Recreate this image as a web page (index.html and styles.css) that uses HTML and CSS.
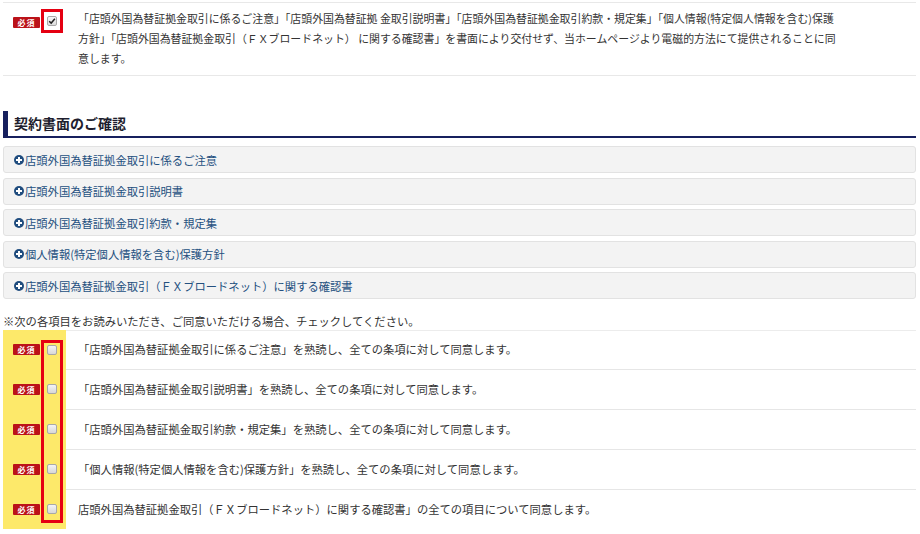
FILE: index.html
```html
<!DOCTYPE html>
<html lang="ja">
<head>
<meta charset="utf-8">
<title>契約書面のご確認</title>
<link rel="stylesheet" href="styles.css">
</head>
<body>
<div class="page">
  <section class="consent-top">
    <div class="req-cell">
      <span class="badge">必須</span>
      <span class="cb checked"><svg viewBox="0 0 10 10" width="8" height="8"><path d="M1.5 5.2 L4 7.6 L8.6 2.2" fill="none" stroke="#222" stroke-width="1.8"/></svg></span>
      <span class="hl hl-top"></span>
    </div>
    <p class="consent-text">「店頭外国為替証拠金取引に係るご注意」「店頭外国為替証拠 金取引説明書」「店頭外国為替証拠金取引約款・規定集」「個人情報(特定個人情報を含む)保護<br>方針」「店頭外国為替証拠金取引（ＦＸブロードネット） に関する確認書」を書面により交付せず、当ホームページより電磁的方法にて提供されることに同<br>意します。</p>
  </section>

  <h2 class="sec-title">契約書面のご確認</h2>

  <ul class="docs">
    <li class="doc"><span class="plus"></span>店頭外国為替証拠金取引に係るご注意</li>
    <li class="doc"><span class="plus"></span>店頭外国為替証拠金取引説明書</li>
    <li class="doc"><span class="plus"></span>店頭外国為替証拠金取引約款・規定集</li>
    <li class="doc"><span class="plus"></span>個人情報(特定個人情報を含む)保護方針</li>
    <li class="doc"><span class="plus"></span>店頭外国為替証拠金取引（ＦＸブロードネット）に関する確認書</li>
  </ul>

  <p class="note">※次の各項目をお読みいただき、ご同意いただける場合、チェックしてください。</p>

  <div class="agree">
    <div class="agree-row">
      <div class="req-cell yellow"><span class="badge">必須</span><span class="cb"></span></div>
      <div class="agree-text">「店頭外国為替証拠金取引に係るご注意」を熟読し、全ての条項に対して同意します。</div>
    </div>
    <div class="agree-row">
      <div class="req-cell yellow"><span class="badge">必須</span><span class="cb"></span></div>
      <div class="agree-text">「店頭外国為替証拠金取引説明書」を熟読し、全ての条項に対して同意します。</div>
    </div>
    <div class="agree-row">
      <div class="req-cell yellow"><span class="badge">必須</span><span class="cb"></span></div>
      <div class="agree-text">「店頭外国為替証拠金取引約款・規定集」を熟読し、全ての条項に対して同意します。</div>
    </div>
    <div class="agree-row">
      <div class="req-cell yellow"><span class="badge">必須</span><span class="cb"></span></div>
      <div class="agree-text">「個人情報(特定個人情報を含む)保護方針」を熟読し、全ての条項に対して同意します。</div>
    </div>
    <div class="agree-row">
      <div class="req-cell yellow"><span class="badge">必須</span><span class="cb"></span></div>
      <div class="agree-text">店頭外国為替証拠金取引（ＦＸブロードネット）に関する確認書」の全ての項目について同意します。</div>
    </div>
    <span class="hl hl-list"></span>
  </div>
</div>
</body>
</html>
```

FILE: styles.css
```css
* { box-sizing: border-box; }

html, body {
  margin: 0;
  padding: 0;
  background: #fff;
}

body {
  font-family: "Noto Sans CJK JP", "Noto Sans", sans-serif;
  font-size: 11.3px;
  color: #333;
}

.page {
  margin: 2px 4px 0 3px;
}

/* top consent */
.consent-top {
  display: flex;
  border-top: 1px solid #e8e8e8;
  border-bottom: 1px solid #e8e8e8;
  padding: 5px 0 7px;
}

.req-cell {
  position: relative;
  width: 63px;
  flex: 0 0 63px;
  display: flex;
  align-items: center;
  padding-left: 10px;
}

.consent-top .req-cell {
  align-items: flex-start;
  padding-top: 9px;
}

.badge {
  display: inline-block;
  width: 27px;
  height: 11px;
  line-height: 11px;
  background: #bb1219;
  color: #fff;
  font-size: 8px;
  font-weight: bold;
  text-align: center;
  border-radius: 1px;
  letter-spacing: 1px;
}

.cb {
  display: inline-flex;
  align-items: center;
  justify-content: center;
  width: 10px;
  height: 10px;
  margin-left: 7px;
  border: 1px solid #a8a8a8;
  border-radius: 2px;
  background: linear-gradient(#f4f4f4, #d8d8d8);
}

.consent-top .cb {
  margin-top: -1px;
}

.cb.checked {
  background: linear-gradient(#f6f6f6, #dcdcdc);
}

.hl {
  position: absolute;
  border: 3px solid #e50012;
}

.hl-top {
  left: 38px;
  top: 1px;
  width: 22px;
  height: 24px;
}

.consent-text {
  margin: 0;
  padding-left: 12px;
  line-height: 20px;
  font-size: 10.9px;
  white-space: nowrap;
}

/* heading */
.sec-title {
  margin: 35px 0 0;
  height: 27px;
  line-height: 25px;
  font-size: 14px;
  font-weight: bold;
  color: #1e1e2e;
  border-left: 5px solid #17205e;
  border-bottom: 2px solid #17205e;
  padding-left: 6px;
}

/* docs list */
.docs {
  list-style: none;
  margin: 8px 0 0;
  padding: 0;
}

.doc {
  display: flex;
  align-items: center;
  height: 27px;
  margin-bottom: 4.5px;
  padding-left: 10px;
  background: #f3f3f3;
  border: 1px solid #e2e2e2;
  border-radius: 3px;
  color: #24507f;
}

.doc:last-child {
  margin-bottom: 0;
}

.plus {
  position: relative;
  width: 10px;
  height: 10px;
  margin-right: 1px;
  border-radius: 50%;
  background: #1f4c7e;
  flex: 0 0 10px;
}

.plus::before,
.plus::after {
  content: "";
  position: absolute;
  background: #fff;
}

.plus::before {
  left: 2px;
  top: 4px;
  width: 6px;
  height: 2px;
}

.plus::after {
  left: 4px;
  top: 2px;
  width: 2px;
  height: 6px;
}

/* note */
.note {
  margin: 14px 0 1px;
  line-height: 16px;
}

/* agreement rows */
.agree {
  position: relative;
}

.agree-row {
  display: flex;
  height: 40px;
}

.agree-row:first-child {
  height: 39px;
}

.req-cell.yellow {
  background: #fde96a;
}

.agree-text {
  flex: 1;
  display: flex;
  align-items: center;
  padding-left: 12px;
  padding-bottom: 2px;
  border-top: 1px solid #e6e6e6;
}

.agree-row:first-child .agree-text {
  border-top: 1px solid #ececec;
}

.agree-row:last-child .agree-text {
  border-bottom: 1px solid #e6e6e6;
}

.hl-list {
  left: 38px;
  top: 10px;
  width: 22px;
  height: 183px;
}
```
